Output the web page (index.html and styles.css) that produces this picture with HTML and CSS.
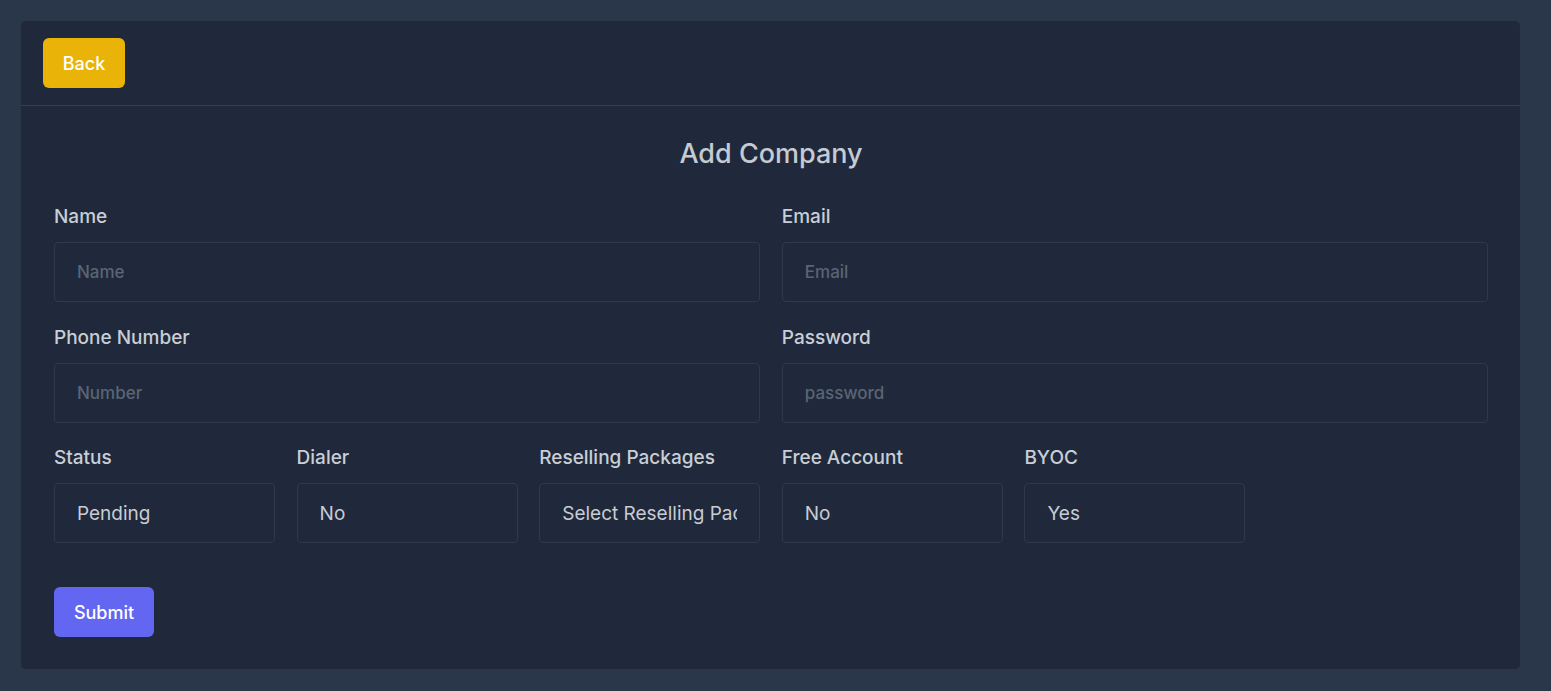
FILE: index.html
```html
<!DOCTYPE html>
<html lang="en">
<head>
<meta charset="utf-8">
<title>Add Company</title>
<link rel="stylesheet" href="styles.css">
</head>
<body>
<div class="card">
  <div class="card-header">
    <button class="btn btn-back" type="button">Back</button>
  </div>
  <div class="card-body">
    <h2 class="title">Add Company</h2>
    <form class="form">
      <div class="field span3">
        <label class="label">Name</label>
        <input class="input" type="text" placeholder="Name">
      </div>
      <div class="field span3">
        <label class="label">Email</label>
        <input class="input" type="text" placeholder="Email">
      </div>
      <div class="field span3">
        <label class="label">Phone Number</label>
        <input class="input" type="text" placeholder="Number">
      </div>
      <div class="field span3">
        <label class="label">Password</label>
        <input class="input" type="text" placeholder="password">
      </div>
      <div class="field">
        <label class="label">Status</label>
        <div class="select"><span class="select-text">Pending</span></div>
      </div>
      <div class="field">
        <label class="label">Dialer</label>
        <div class="select"><span class="select-text">No</span></div>
      </div>
      <div class="field">
        <label class="label">Reselling Packages</label>
        <div class="select"><span class="select-text">Select Reselling Packages</span></div>
      </div>
      <div class="field">
        <label class="label">Free Account</label>
        <div class="select"><span class="select-text">No</span></div>
      </div>
      <div class="field">
        <label class="label">BYOC</label>
        <div class="select"><span class="select-text">Yes</span></div>
      </div>
    </form>
    <button class="btn btn-submit" type="button">Submit</button>
  </div>
</div>
</body>
</html>
```

FILE: styles.css
```css
* { box-sizing: border-box; }
html, body { margin: 0; padding: 0; }
body {
  background: #2a3649;
  font-family: Inter, "Noto Sans", sans-serif;
  padding: 21px 31px 22px 21px;
  min-height: 691px;
}
.card {
  background: #1f293b;
  border-radius: 5px;
  height: 648px;
}
.card-header {
  padding: 17px 22px;
  border-bottom: 1px solid #344155;
}
.btn {
  border: none;
  border-radius: 6px;
  color: #ffffff;
  font-family: Inter, sans-serif;
  font-size: 18px;
  font-weight: 500;
  height: 50px;
  padding: 0;
  cursor: pointer;
}
.btn-back {
  background: #eab308;
  width: 82px;
  display: block;
}
.card-body {
  padding: 32px 32px 32px 33px;
}
.title {
  margin: 0 0 35px;
  text-align: center;
  font-size: 27px;
  line-height: 32px;
  font-weight: 500;
  color: #c5cad3;
}
.form {
  display: grid;
  grid-template-columns: repeat(6, minmax(0, 1fr));
  column-gap: 21.6px;
  row-gap: 23.5px;
}
.field { display: flex; flex-direction: column; gap: 13px; min-width: 0; }
.span3 { grid-column: span 3; }
.label {
  font-size: 19px;
  line-height: 24px;
  font-weight: 500;
  color: #c9ced6;
}
.input, .select {
  height: 60px;
  width: 100%;
  min-width: 0;
  border: 1px solid #2e394b;
  border-radius: 4px;
  background: #1f293b;
  padding: 0 22px;
  font-family: Inter, sans-serif;
  outline: none;
}
.input {
  font-size: 17px;
  font-weight: 500;
  color: #c9ced6;
}
.input::placeholder { color: #5b6474; }
.select {
  display: flex;
  align-items: center;
}
.select-text {
  display: block;
  min-width: 0;
  font-size: 19px;
  color: #c8ccd4;
  white-space: nowrap;
  overflow: hidden;
}
.btn-submit {
  margin-top: 44px;
  background: #6366f1;
  width: 100px;
  display: block;
}
```
